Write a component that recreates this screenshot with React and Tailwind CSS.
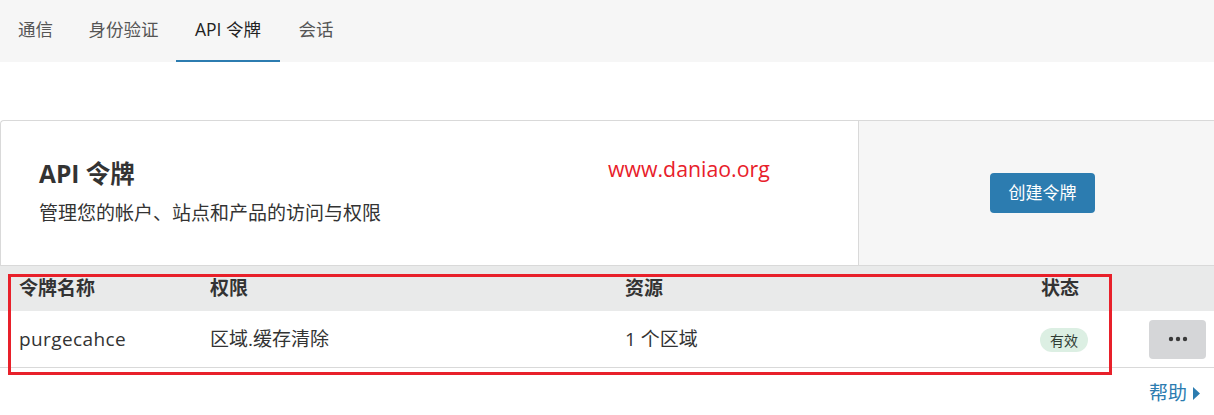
export default function App() {
	const tabs = [
		{ label: '通信', w: 'w-[71px]' },
		{ label: '身份验证', w: 'w-[105px]' },
		{ label: 'API 令牌', w: 'w-[104px]', active: true },
		{ label: '会话', w: 'w-[72px]' },
	]
	return (
		<div className="w-[1214px] h-[415px] overflow-hidden bg-white text-[#333] font-['Open_Sans','Noto_Sans_CJK_SC',sans-serif]">
			<nav className="h-[62px] bg-[#f6f6f6] flex">
				{tabs.map(t => (
					<div
						key={t.label}
						className={`${t.w} h-[62px] flex items-center justify-center pb-[2px] text-[17.5px] border-b-2 ${t.active ? 'border-[#2c7cb0] text-[#222]' : 'border-transparent text-[#555]'}`}
					>
						{t.label}
					</div>
				))}
			</nav>

			<div className="h-[58px]" />

			<section className="relative flex h-[146px] border-t border-b border-l border-[#d9d9d9] rounded-tl-[4px]">
				<div className="flex-1 pl-[38px] pt-[36px]">
					<h2 className="text-[24.5px] font-bold leading-[34px] text-[#333]">API 令牌</h2>
					<p className="mt-[8px] text-[19px] leading-[28px] text-[#333]">管理您的帐户、站点和产品的访问与权限</p>
				</div>
				<span className="absolute left-[607px] top-[33px] text-[21.3px] leading-[30px] text-[#e8202a]">www.daniao.org</span>
				<div className="w-[356px] bg-[#f6f6f6] border-l border-[#d9d9d9] flex items-center pl-[131px]">
					<button className="w-[105px] h-[40px] rounded-[4px] bg-[#2c7cb0] text-white text-[17px]">创建令牌</button>
				</div>
			</section>

			<div className="relative">
				<div className="h-[45px] bg-[#e9eaea] pl-[19px] grid grid-cols-[191px_415px_416px_108px] items-center text-[19px] font-bold text-[#333]">
					<div>令牌名称</div>
					<div>权限</div>
					<div>资源</div>
					<div>状态</div>
				</div>
				<div className="h-[57px] border-b border-[#d9d9d9] pl-[19px] grid grid-cols-[191px_415px_416px_108px_57px] items-center text-[19px] text-[#333]">
					<div className="tracking-[0.4px]">purgecahce</div>
					<div>区域.缓存清除</div>
					<div>1 个区域</div>
					<div>
						<span className="inline-flex items-center justify-center w-[48px] h-[24px] rounded-full bg-[#dcefe3] text-[14px] text-[#2f3b33] -ml-[1px]">有效</span>
					</div>
					<button className="w-[57px] h-[39px] rounded-[4px] bg-[#d5d6d8] flex items-center justify-center">
						<svg width="20" height="6" viewBox="0 0 20 6" fill="#3a3a3a">
							<circle cx="3" cy="3" r="2.2" />
							<circle cx="10" cy="3" r="2.2" />
							<circle cx="17" cy="3" r="2.2" />
						</svg>
					</button>
				</div>
				<div className="absolute left-[8px] top-[8px] w-[1104px] h-[101px] border-[3px] border-[#e8202a]" />
				<div className="flex justify-end items-center pr-[14px] pt-[11px] text-[#2c7cb0]">
					<span className="text-[19px] leading-[28px]">帮助</span>
					<svg className="ml-[6px]" width="7" height="13" viewBox="0 0 7 13" fill="#2c7cb0">
						<path d="M0 0 L7 6.5 L0 13 Z" />
					</svg>
				</div>
			</div>
		</div>
	)
}
